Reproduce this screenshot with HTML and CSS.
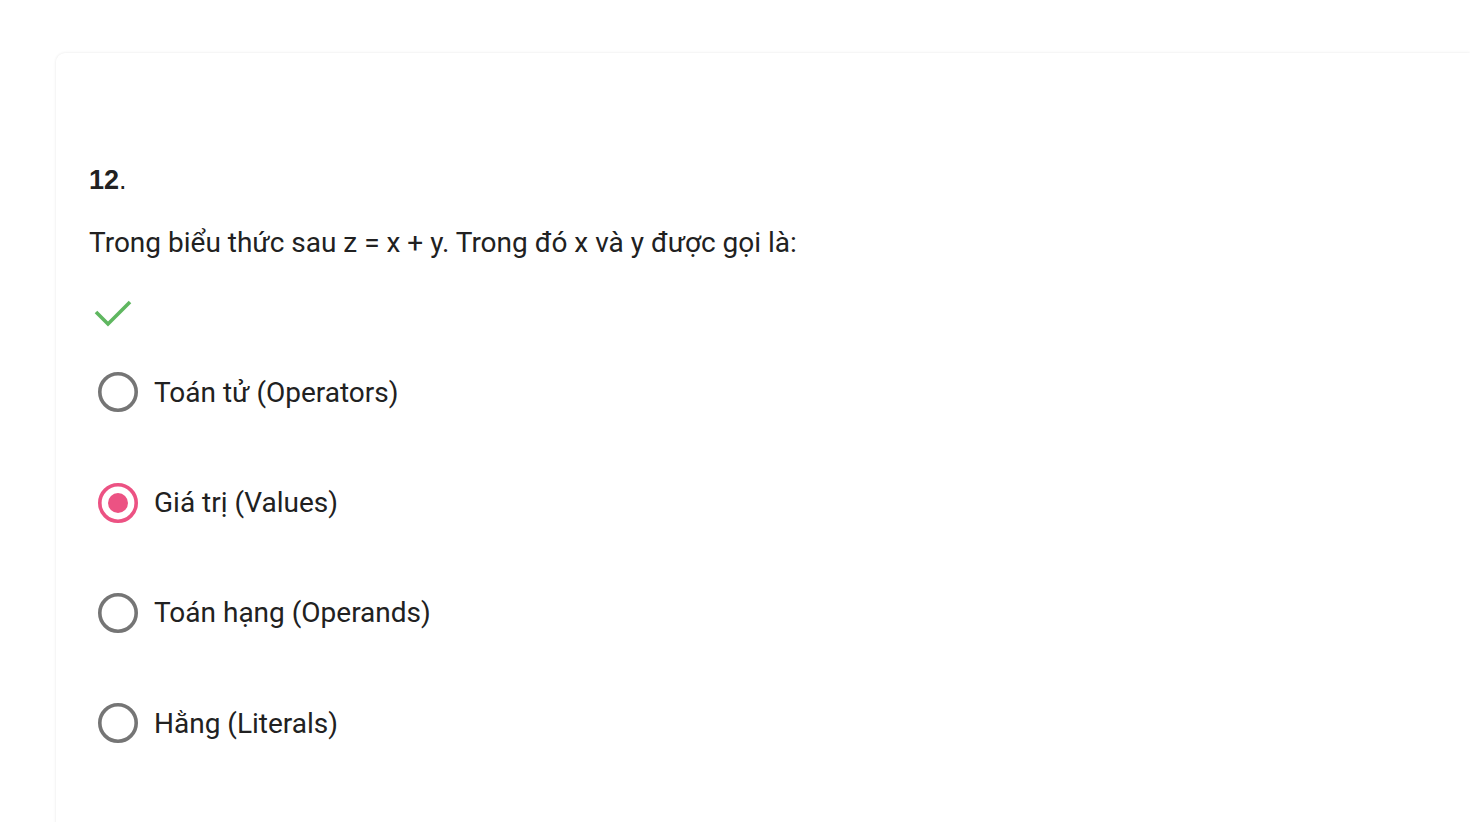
FILE: index.html
```html
<!DOCTYPE html>
<html lang="vi">
<head>
<meta charset="utf-8">
<title>Câu hỏi 12</title>
<link rel="stylesheet" href="styles.css">
</head>
<body>
<div class="page">
  <div class="card">
    <div class="qnum"><b>12</b>.</div>
    <div class="qtext">Trong biểu thức sau z = x + y. Trong đó x và y được gọi là:</div>
    <div class="status">
      <svg width="38" height="32" viewBox="0 0 38 32"><polyline points="2,15 14,27 36,5" fill="none" stroke="#5fb760" stroke-width="3.6"/></svg>
    </div>
    <div class="options">
      <label class="opt">
        <svg class="radio" width="44" height="44" viewBox="0 0 44 44"><circle cx="22" cy="22" r="18.2" fill="none" stroke="#757575" stroke-width="3.6"/></svg>
        <span>Toán tử (Operators)</span>
      </label>
      <label class="opt">
        <svg class="radio" width="44" height="44" viewBox="0 0 44 44"><circle cx="22" cy="22" r="18.2" fill="none" stroke="#ec5283" stroke-width="3.6"/><circle cx="22" cy="22" r="10" fill="#ec5283"/></svg>
        <span>Giá trị (Values)</span>
      </label>
      <label class="opt">
        <svg class="radio" width="44" height="44" viewBox="0 0 44 44"><circle cx="22" cy="22" r="18.2" fill="none" stroke="#757575" stroke-width="3.6"/></svg>
        <span>Toán hạng (Operands)</span>
      </label>
      <label class="opt">
        <svg class="radio" width="44" height="44" viewBox="0 0 44 44"><circle cx="22" cy="22" r="18.2" fill="none" stroke="#757575" stroke-width="3.6"/></svg>
        <span>Hằng (Literals)</span>
      </label>
    </div>
  </div>
</div>
</body>
</html>
```
FILE: styles.css
```css
html, body {
  margin: 0;
  padding: 0;
  background: #fff;
  height: 100%;
  overflow: hidden;
}
.page {
  padding: 53px 0 0 56px;
}
.card {
  background: #fff;
  border-radius: 9px 0 0 0;
  box-shadow: 0 0 3px rgba(0, 0, 0, 0.1);
  min-height: 900px;
  padding: 111px 0 0 33px;
  color: #212121;
  font-family: Roboto, "Noto Sans", sans-serif;
}
.qnum {
  font-family: "Liberation Sans", Arial, sans-serif;
  font-size: 27px;
  line-height: 32px;
}
.qnum b {
  font-weight: 700;
}
.qtext {
  margin-top: 31px;
  font-size: 28px;
  line-height: 32px;
}
.status {
  margin-top: 38px;
  height: 32px;
  padding-left: 5px;
}
.status svg {
  display: block;
}
.options {
  margin-top: 8px;
  display: flex;
  flex-direction: column;
}
.opt {
  display: flex;
  align-items: center;
  height: 110.4px;
  font-size: 28px;
  gap: 14px;
  padding-left: 7px;
}
.radio {
  display: block;
  flex: none;
}
```
